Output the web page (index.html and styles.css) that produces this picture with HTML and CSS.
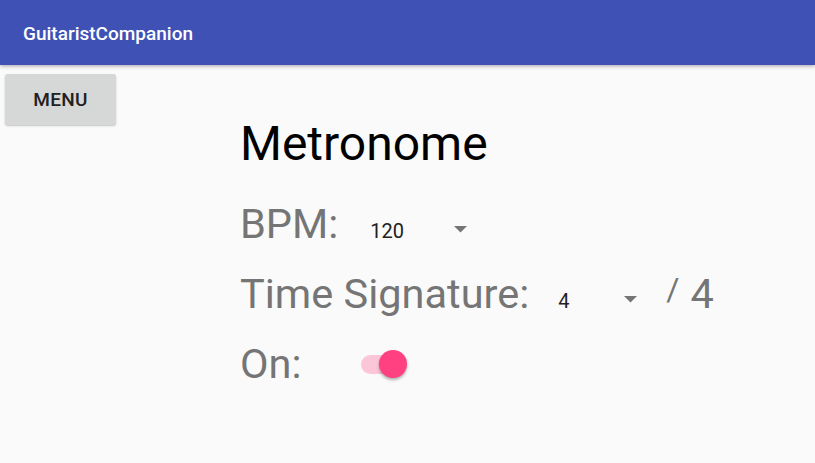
FILE: index.html
```html
<!DOCTYPE html>
<html>
<head>
<meta charset="utf-8">
<link rel="stylesheet" href="styles.css">
</head>
<body>
<header class="appbar"><span class="apptitle">GuitaristCompanion</span></header>
<main class="main">
  <aside class="side"><button class="menu-btn">MENU</button></aside>
  <section class="content">
    <h1 class="heading">Metronome</h1>
    <div class="row row-bpm">
      <span class="label">BPM:</span>
      <span class="spinner spinner-bpm"><span class="val">120</span><span class="caret"><svg width="13" height="7" viewBox="0 0 13 7"><path d="M0 0H13L6.5 6.5Z" fill="#757575"/></svg></span></span>
    </div>
    <div class="row">
      <span class="label">Time Signature:</span>
      <span class="spinner spinner-ts"><span class="val">4</span><span class="caret"><svg width="13" height="7" viewBox="0 0 13 7"><path d="M0 0H13L6.5 6.5Z" fill="#757575"/></svg></span></span>
      <span class="slash">/</span>
      <span class="label denom">4</span>
    </div>
    <div class="row">
      <span class="label">On:</span>
      <span class="switch"><span class="track"></span><span class="thumb"></span></span>
    </div>
  </section>
</main>
</body>
</html>
```

FILE: styles.css
```css
html, body {
  margin: 0;
  padding: 0;
}
body {
  background: #fafafa;
  font-family: Roboto, "Noto Sans", sans-serif;
  width: 815px;
  height: 463px;
  overflow: hidden;
}
.appbar {
  height: 65px;
  background: #3f51b5;
  display: flex;
  align-items: center;
  padding-left: 23px;
  box-shadow: 0 1px 4px rgba(0,0,0,0.35);
  position: relative;
  z-index: 1;
}
.apptitle {
  color: #fff;
  font-size: 19px;
  font-weight: 500;
  margin-top: 2px;
}
.main {
  display: flex;
}
.side {
  padding: 9px 0 0 5px;
}
.menu-btn {
  width: 111px;
  height: 51px;
  background: #d6d7d7;
  border: none;
  border-radius: 3px;
  box-shadow: 0 1px 2px rgba(0,0,0,0.22);
  font-family: Roboto, sans-serif;
  font-weight: 500;
  font-size: 19px;
  color: #212121;
  padding: 0;
  letter-spacing: 0.3px;
}
.content {
  margin-left: 124px;
  padding-top: 51px;
}
.heading {
  margin: 0 0 16px 0;
  font-size: 48px;
  font-weight: 400;
  line-height: 56px;
  color: #000;
}
.row {
  display: flex;
  align-items: baseline;
  height: 70px;
}
.row-bpm {
  height: 71px;
}
.label {
  font-size: 41.5px;
  line-height: 70px;
  color: #757575;
}
.row-bpm .label { line-height: 71px; }
.spinner {
  display: flex;
  align-items: baseline;
  justify-content: space-between;
  font-size: 20px;
  color: #212121;
}
.spinner-bpm { width: 97px; margin-left: 32px; }
.spinner-ts { width: 79px; margin-left: 29px; }
.caret svg {
  vertical-align: 5px;
  display: inline-block;
}
.slash {
  font-size: 32px;
  color: #757575;
  margin-left: 29px;
  position: relative;
  top: -8px;
}
.denom {
  margin-left: 11px;
}
.switch {
  display: inline-flex;
  align-items: center;
  margin-left: 59px;
  align-self: center;
}
.track {
  width: 40px;
  height: 19px;
  border-radius: 10px;
  background: #fcc6d9;
}
.thumb {
  width: 28px;
  height: 28px;
  border-radius: 50%;
  background: #ff4081;
  margin-left: -22px;
  box-shadow: 0 2px 3px rgba(0,0,0,0.3);
}
```
